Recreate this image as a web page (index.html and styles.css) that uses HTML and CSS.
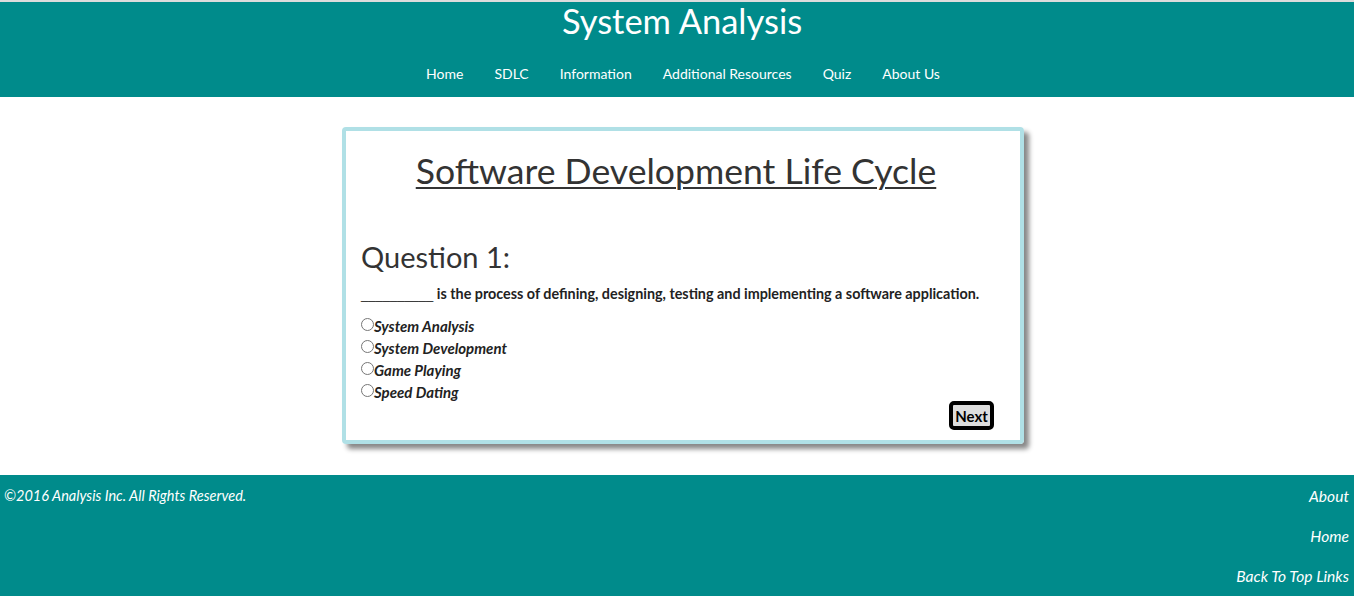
FILE: index.html
```html
<!DOCTYPE html>
<html>
<head>
<meta charset="utf-8">
<link rel="stylesheet" href="styles.css">
</head>
<body>
<header class="site-header">
  <h1 class="site-title">System Analysis</h1>
  <nav class="main-nav">
    <a href="#">Home</a>
    <a href="#">SDLC</a>
    <a href="#">Information</a>
    <a href="#">Additional Resources</a>
    <a href="#">Quiz</a>
    <a href="#">About Us</a>
  </nav>
</header>
<main class="content">
  <section class="quiz-card">
    <h2 class="quiz-title">Software Development Life Cycle</h2>
    <h3 class="question-title">Question 1:</h3>
    <p class="question-text"><span class="blank">__________</span> is the process of defining, designing, testing and implementing a software application.</p>
    <form class="options">
      <label class="option"><input type="radio" name="q1"><span>System Analysis</span></label>
      <label class="option"><input type="radio" name="q1"><span>System Development</span></label>
      <label class="option"><input type="radio" name="q1"><span>Game Playing</span></label>
      <label class="option"><input type="radio" name="q1"><span>Speed Dating</span></label>
      <div class="actions"><button type="button" class="next-btn">Next</button></div>
    </form>
  </section>
</main>
<footer class="site-footer">
  <p class="copyright">©2016 Analysis Inc. All Rights Reserved.</p>
  <ul class="footer-links">
    <li><a href="#">About</a></li>
    <li><a href="#">Home</a></li>
    <li><a href="#">Back To Top Links</a></li>
  </ul>
</footer>
</body>
</html>
```
FILE: styles.css
```css
* { box-sizing: border-box; }
html, body { margin: 0; padding: 0; }
body {
  background: #ffffff;
  font-family: Lato, "Open Sans", sans-serif;
  color: #222;
  border-top: 2px solid #dcdcdc;
}
.site-header {
  background: #008b8b;
  height: 95px;
  display: flex;
  flex-direction: column;
  align-items: center;
}
.site-title {
  margin: 0;
  padding-left: 10px;
  font-size: 34.5px;
  font-weight: 400;
  color: #fff;
  line-height: 38px;
}
.main-nav {
  display: flex;
  gap: 31px;
  margin-top: 25px;
  padding-left: 12px;
}
.main-nav a {
  color: #fff;
  text-decoration: none;
  font-size: 14px;
  line-height: 18px;
}
.content {
  padding: 30px 0 31px 342px;
}
.quiz-card {
  width: 682px;
  height: 317px;
  border: 4px solid #b0e0e6;
  border-radius: 4px;
  box-shadow: 5px 5px 5px #888;
  padding: 15px 15px 0 15px;
  display: flex;
  flex-direction: column;
}
.quiz-title {
  margin: 0;
  padding-right: 14px;
  text-align: center;
  font-size: 35.6px;
  font-weight: 400;
  text-decoration: underline;
  text-decoration-thickness: 2px;
  text-underline-offset: 3px;
  color: #333;
  line-height: 50px;
}
.question-title {
  margin: 44px 0 0 0;
  font-size: 29px;
  font-weight: 400;
  line-height: 34px;
  color: #333;
}
.question-text {
  margin: 11px 0 0 0;
  height: 18px;
  font-size: 14.35px;
  font-weight: 700;
  line-height: 18px;
  color: #222;
}
.blank {
  font-family: "Liberation Sans", Arial, sans-serif;
  font-weight: 400;
  font-size: 13px;
  line-height: 1;
}
.options {
  margin-top: 12px;
  display: flex;
  flex-direction: column;
}
.option {
  display: flex;
  align-items: center;
  height: 22px;
  font-size: 15px;
  font-style: italic;
  font-weight: 700;
  color: #222;
}
.option input {
  margin: 0;
  width: 13px;
  height: 13px;
  position: relative;
  top: -2px;
}
.actions {
  display: flex;
  justify-content: flex-end;
  padding-right: 11px;
  margin-top: -2px;
}
.next-btn {
  font-family: inherit;
  font-weight: 700;
  font-size: 15px;
  background: #dddddd;
  border: 4px solid #000;
  border-radius: 5px;
  width: 45px;
  height: 29px;
  padding: 0;
  color: #000;
}
.site-footer {
  background: #008b8b;
  height: 121px;
  display: flex;
  justify-content: space-between;
  align-items: flex-start;
  color: #fff;
  font-style: italic;
  font-size: 14.5px;
  padding: 12px 5px 0 4px;
}
.copyright { margin: 0; line-height: 18px; }
.footer-links {
  list-style: none;
  margin: 0;
  padding: 0;
  display: flex;
  flex-direction: column;
  align-items: flex-end;
  gap: 22px;
}
.footer-links a {
  color: #fff;
  text-decoration: none;
  line-height: 18px;
  font-size: 15.6px;
}
```
